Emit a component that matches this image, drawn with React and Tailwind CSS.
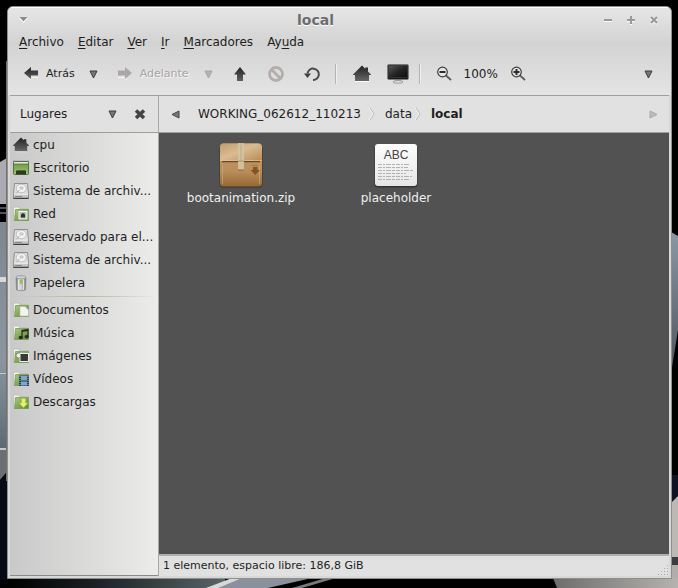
const menus = [
  ["", "A", "rchivo"],
  ["", "E", "ditar"],
  ["", "V", "er"],
  ["", "I", "r"],
  ["", "M", "arcadores"],
  ["Ay", "u", "da"],
];

function Wallpaper() {
  return (
    <svg className="absolute inset-0 w-full h-full" viewBox="0 0 678 588" preserveAspectRatio="none" aria-hidden="true">
      <defs>
        <linearGradient id="wl" x1="0" y1="0" x2="0" y2="1">
          <stop offset="0" stopColor="#7d8790" />
          <stop offset="0.6" stopColor="#8b96a0" />
          <stop offset="1" stopColor="#5c6973" />
        </linearGradient>
        <linearGradient id="wb" x1="0" y1="0" x2="1" y2="0">
          <stop offset="0" stopColor="#000" />
          <stop offset="0.4" stopColor="#1b2124" />
          <stop offset="1" stopColor="#5a6466" />
        </linearGradient>
        <linearGradient id="wr" x1="0" y1="0" x2="0" y2="1">
          <stop offset="0" stopColor="#8c97a5" />
          <stop offset="1" stopColor="#4c535c" />
        </linearGradient>
        <linearGradient id="wc" x1="0" y1="0" x2="1" y2="0">
          <stop offset="0" stopColor="#6f6d6c" />
          <stop offset="1" stopColor="#b5b2af" />
        </linearGradient>
      </defs>
      <rect width="678" height="588" fill="#000" />
      <path d="M0 162L7 158V204H0z" fill="#aaaab2" />
      <path d="M0 207h7v2H0zM0 212h7v2H0z" fill="#4c5260" />
      <rect y="222" width="7" height="228" fill="url(#wl)" />
      <path d="M0 277h7v5H0z" fill="#d8d8d8" />
      <path d="M0 373h7v1H0zM0 448h7v2H0z" fill="#c4c8cc" />
      <path d="M0 450h7v22L0 480z" fill="#6b6f74" />
      <path d="M0 480L7 472V580H0z" fill="#060a14" />
      <path d="M6 61h1v420h-1z" fill="#77716e" />
      <rect x="10" y="578" width="215" height="10" fill="url(#wb)" />
      <path d="M206 588L240 578H312L268 588z" fill="#8b909d" />
      <path d="M206 588L232 578H242L218 588z" fill="#d8d8d8" />
      <path d="M292 588L326 578H336L302 588z" fill="#77797d" />
      <path d="M671 232L678 236V330L671 374z" fill="url(#wr)" />
      <path d="M671 475h7v30l-7-3z" fill="#101422" />
      <path d="M671 503L678 496V557H671z" fill="#bcb9b4" />
      <path d="M671 557h7v8h-7z" fill="#3c3c40" />
      <path d="M671 565h7v14h-7z" fill="#b0adaa" />
      <path d="M553 578H678V588H557z" fill="url(#wc)" />
    </svg>
  );
}

function Down({ className = "fill-[#777] stroke-[#3c3c3c]" }) {
  return (
    <svg width="9" height="9" viewBox="0 0 9 9" className={className}>
      <path d="M1 1h7L4.500 8z" strokeWidth="1" />
    </svg>
  );
}

function Arrow({ muted = false }) {
  return (
    <svg width="16" height="16" viewBox="0 0 16 16" className={muted ? "-scale-x-100" : ""}>
      <defs>
        <linearGradient id="arrow" x1="0" y1="0" x2="0" y2="1">
          <stop offset="0" stopColor="#222" />
          <stop offset="1" stopColor="#606060" />
        </linearGradient>
      </defs>
      <path d="M7 14V11.500h8" stroke="#f4f4f4" fill="none" />
      <path d="M1 7L8 1v3.500h7v5H8V13z" fill={muted ? "#aaa7a6" : "url(#arrow)"} />
    </svg>
  );
}

function HomeIcon({ size = 18 }) {
  return (
    <svg width={size} height={size} viewBox="0 0 18 18">
      <defs>
        <linearGradient id="home" x1="0" y1="0" x2="0" y2="1">
          <stop offset="0" stopColor="#202020" />
          <stop offset="1" stopColor="#686868" />
        </linearGradient>
      </defs>
      <path d="M2 16.500h14" stroke="#fafafa" />
      <path d="M0 9.500L9 .5l3.200 3.200V2.500H15v4l3 3v.6h-2V16H2v-5.900H0z" fill="url(#home)" />
    </svg>
  );
}

function ZoomIcon({ plus }) {
  return (
    <svg width="16" height="16" viewBox="0 0 16 16" fill="none">
      <path d="M10 9.500l5 4.500" stroke="#5c5c5c" strokeWidth="1.800" />
      <circle cx="6.500" cy="6" r="4.800" stroke="#3b3b3b" strokeWidth="1.200" fill="#e6e6e6" />
      <path d={plus ? "M3.500 6h6M6.500 3v6" : "M3.500 6h6"} stroke="#2c2c2c" strokeWidth="2" />
    </svg>
  );
}

function Monitor() {
  return (
    <svg width="22" height="20" viewBox="0 0 22 20">
      <defs>
        <linearGradient id="screen" x1="0" y1="0" x2="1" y2="1">
          <stop offset="0" stopColor="#5a5a5a" />
          <stop offset="0.5" stopColor="#262626" />
          <stop offset="1" stopColor="#0c0c0c" />
        </linearGradient>
      </defs>
      <path d="M8 15.500h6v2H8z" fill="#b9b9b9" />
      <ellipse cx="11" cy="17.900" rx="5" ry="1.300" fill="#e4e4e4" stroke="#8a8a8a" strokeWidth="0.800" />
      <rect x="0.500" y="0.500" width="21" height="15" rx="1" fill="#1c1c1c" />
      <rect x="1.500" y="1.500" width="19" height="12" fill="url(#screen)" stroke="#3d3d3d" strokeWidth="0.600" />
      <path d="M1 .7h20" stroke="#777" strokeWidth="0.600" />
    </svg>
  );
}

function Separator() {
  return <div className="w-[2px] h-5 border-l border-[#b4b4b4] bg-[#efefef]" />;
}

function Drive() {
  return (
    <svg width="16" height="16" viewBox="0 0 16 16">
      <path d="M1.500.5h13l1 10v5H.5v-5z" fill="#dedede" stroke="#8f8f8f" />
      <path d="M1 11.500h14V15H1z" fill="#c6c6c6" />
      <path d="M1 11.300h14" stroke="#f6f6f6" strokeWidth="0.800" />
      <path d="M2 13.500h7" stroke="#8a8a8a" />
      <path d="M.5 15.300h15" stroke="#3e3e3e" strokeWidth="1.200" />
      <ellipse cx="8.300" cy="5.500" rx="5" ry="4.300" fill="#f3f3f3" stroke="#b4b4b4" strokeWidth="0.800" />
      <ellipse cx="8.500" cy="5" rx="1.700" ry="1.300" fill="#ddd" stroke="#a2a2a2" strokeWidth="0.600" />
      <path d="M3 10.500l3.500-3.500" stroke="#a6a6a6" />
    </svg>
  );
}

function Desktop() {
  return (
    <svg width="16" height="16" viewBox="0 0 16 16">
      <defs>
        <linearGradient id="desk" x1="0" y1="0" x2="0" y2="1">
          <stop offset="0" stopColor="#6a9440" />
          <stop offset="1" stopColor="#9dc66f" />
        </linearGradient>
      </defs>
      <rect x="0.500" y="1.500" width="15" height="13" rx="0.800" fill="url(#desk)" stroke="#55773a" />
      <path d="M1 2h14v1.800H1z" fill="#e2e6dd" />
      <path d="M0 1.300h16M1 4.200h14" stroke="#5c6a50" strokeWidth="0.700" />
      <path d="M3 11h10v3.500H3z" fill="#2f3a25" />
      <path d="M3.500 10.500h9" stroke="#55643f" />
    </svg>
  );
}

function Folder({ kind }) {
  return (
    <svg width="16" height="16" viewBox="0 0 16 16">
      <defs>
        <linearGradient id="folder" x1="0" y1="0" x2="1" y2="1">
          <stop offset="0" stopColor="#a9ca82" />
          <stop offset="1" stopColor="#5d8734" />
        </linearGradient>
      </defs>
      <path d="M.5 14.500v-12L1.500 1h4l1 1.500h8.500V14.500z" fill="#f5f5f2" stroke="#b7bbb0" strokeWidth="0.800" />
      <path d="M2.500 3.500h13v11H1.500z" fill="url(#folder)" stroke="#769a52" strokeWidth="0.800" />
      {kind === "red" && (
        <>
          <rect x="6" y="5.500" width="8" height="7.500" fill="#b9bcb4" stroke="#fafafa" />
          <path d="M8 8.500L10 7l2 1.500V11.500H8z" fill="#303030" />
        </>
      )}
      {kind === "documentos" && (
        <path d="M7 4.500h5L15.500 8v6H7z" fill="#f3f3ef" stroke="#b9bdb3" strokeWidth="0.700" />
      )}
      {kind === "musica" && (
        <g stroke="#262c22" strokeWidth="1.200" fill="#262c22">
          <path d="M9 12V5.500l6-1V11M9 6.500l6-1" fill="none" />
          <ellipse cx="7.800" cy="12.500" rx="1.600" ry="1.200" />
          <ellipse cx="13.700" cy="11.700" rx="1.600" ry="1.200" />
        </g>
      )}
      {kind === "imagenes" && (
        <>
          <circle cx="5.500" cy="7.500" r="2.600" fill="#eee" stroke="#777" />
          <rect x="7" y="5.500" width="8.500" height="8" fill="#383a38" stroke="#ececec" />
        </>
      )}
      {kind === "videos" && (
        <>
          <rect x="6" y="4.500" width="10" height="10.500" fill="#2c4152" />
          <path d="M8 5h6v4.500H8zM8 10.500h6v4H8z" fill="#7ba7c9" />
          <path d="M7 5v10M15 5v10" stroke="#9fb2c0" strokeDasharray="1 1" />
        </>
      )}
      {kind === "descargas" && (
        <path d="M8.500 4.500h4V9H15l-4.500 4.800L6 9h2.500z" fill="#e4f26b" stroke="#a3bd3a" strokeWidth="0.500" />
      )}
    </svg>
  );
}

function Trash() {
  return (
    <svg width="16" height="16" viewBox="0 0 16 16">
      <defs>
        <linearGradient id="can" x1="0" y1="0" x2="1" y2="0">
          <stop offset="0" stopColor="#77797d" />
          <stop offset="0.400" stopColor="#e0e1e3" />
          <stop offset="1" stopColor="#808286" />
        </linearGradient>
      </defs>
      <path d="M3 2.500l.5 12.200c1 1.200 8 1.200 9 0L13 2.500z" fill="url(#can)" stroke="#808286" strokeWidth="0.700" />
      <path d="M5.500 4v11M10.500 4v11" stroke="#f0f0f0" strokeWidth="0.800" />
      <ellipse cx="8" cy="2.300" rx="5" ry="1.600" fill="#d3d4d7" stroke="#85878a" strokeWidth="0.700" />
      <path d="M6.500 5l2.500-.5L10 7 8.500 9H7z" fill="#8fc742" />
    </svg>
  );
}

const places = [
  { name: "cpu", icon: <HomeIcon size={16} /> },
  { name: "Escritorio", icon: <Desktop /> },
  { name: "Sistema de archiv...", icon: <Drive /> },
  { name: "Red", icon: <Folder kind="red" /> },
  { name: "Reservado para el...", icon: <Drive /> },
  { name: "Sistema de archiv...", icon: <Drive /> },
  { name: "Papelera", icon: <Trash /> },
];

const bookmarks = [
  { name: "Documentos", icon: <Folder kind="documentos" /> },
  { name: "Música", icon: <Folder kind="musica" /> },
  { name: "Imágenes", icon: <Folder kind="imagenes" /> },
  { name: "Vídeos", icon: <Folder kind="videos" /> },
  { name: "Descargas", icon: <Folder kind="descargas" /> },
];

function PlaceList({ items }) {
  return (
    <ul>
      {items.map((item, i) => (
        <li key={i}>
          <a href="#" className="flex items-center h-[23px] pl-[3px] gap-1 whitespace-nowrap">
            <span className="shrink-0">{item.icon}</span>
            {item.name}
          </a>
        </li>
      ))}
    </ul>
  );
}

function ZipIcon() {
  return (
    <svg width="46" height="46" viewBox="0 0 46 46">
      <defs>
        <linearGradient id="boxTop" x1="0" y1="0" x2="1" y2="1">
          <stop offset="0" stopColor="#c39c6c" />
          <stop offset="0.450" stopColor="#dabb92" />
          <stop offset="1" stopColor="#b78b56" />
        </linearGradient>
        <linearGradient id="boxFront" x1="0" y1="0" x2="0" y2="1">
          <stop offset="0" stopColor="#c39a66" />
          <stop offset="0.650" stopColor="#b98d58" />
          <stop offset="1" stopColor="#966736" />
        </linearGradient>
      </defs>
      <rect x="1.500" y="3" width="43" height="42.500" rx="3.500" fill="#2d2720" opacity="0.700" />
      <rect x="2" y="1.500" width="42" height="43" rx="3" fill="url(#boxFront)" />
      <path d="M5 1.500h36l3 3V19H2V4.500z" fill="url(#boxTop)" />
      <path d="M2 18.500h42" stroke="#e3c49b" strokeWidth="0.700" />
      <path d="M4 19.700h38" stroke="#6b4824" strokeWidth="1.200" />
      <path d="M4.500 42V21M41.500 42V21" stroke="#cda877" strokeWidth="0.700" />
      <path d="M20 1h6v27h-6z" fill="#d4c4a2" opacity="0.900" />
      <path d="M23 1v18" stroke="#b6a27b" strokeWidth="0.700" />
      <path d="M20 19h6" stroke="#a58a60" strokeWidth="0.700" />
      <path d="M20 28h6" stroke="#86683f" />
      <path d="M35 25h4.500v3h2.500l-4.700 5-4.800-5H35z" fill="#875126" />
      <path d="M33.500 23.500h7" stroke="#a8733f" strokeWidth="0.800" />
    </svg>
  );
}

function TextIcon() {
  return (
    <svg width="46" height="46" viewBox="0 0 46 46">
      <defs>
        <linearGradient id="paper" x1="0" y1="0" x2="0" y2="1">
          <stop offset="0" stopColor="#fdfdfd" />
          <stop offset="1" stopColor="#e6e6e6" />
        </linearGradient>
      </defs>
      <rect x="1.500" y="3" width="43" height="42.500" rx="3.500" fill="#262626" opacity="0.700" />
      <rect x="2" y="2" width="42" height="42" rx="3" fill="url(#paper)" />
      <text x="23" y="17" textAnchor="middle" fontSize="12" fontFamily="Liberation Sans, sans-serif" fill="#444">
        ABC
      </text>
      <g stroke="#a2a2a2" strokeWidth="0.800" strokeDasharray="4 1 2 1 5 1 3 1">
        <path d="M5 22.500h31" />
        <path d="M5 25.500h30" />
        <path d="M5 28.500h36" />
        <path d="M5 31.500h28" />
        <path d="M5 34.500h34" />
        <path d="M5 37.500h31" />
      </g>
    </svg>
  );
}

function Chevron() {
  return (
    <svg width="6" height="12" viewBox="0 0 6 12" fill="none">
      <path d="M1 0l4 6-4 6" stroke="#b4b4b4" />
      <path d="M0 0l4 6-4 6" stroke="#f2f2f2" />
    </svg>
  );
}

function TitleBar() {
  return (
    <div className="relative flex items-center justify-between h-[23px] pl-[11px] pr-3 text-[#969696]">
      <button aria-label="Menú de la ventana">
        <svg width="9" height="6" viewBox="0 0 9 6" className="block">
          <path d="M0 1h9L4.500 6z" fill="#fff" />
          <path d="M0.500 0h8L4.500 4.500z" fill="#8c8c8c" />
        </svg>
      </button>
      <h1 className="absolute inset-x-0 text-center text-sm leading-4 font-bold text-[#6c6c6c] pointer-events-none pr-12 [text-shadow:0_1px_0_#fff]">
        local
      </h1>
      <div className="flex gap-[13px]">
        <button aria-label="Minimizar">
          <svg width="10" height="10" viewBox="0 0 10 10" className="block">
            <path d="M1 6.500h8" stroke="#fff" />
            <path d="M1 5h8" stroke="#999" strokeWidth="2" />
          </svg>
        </button>
        <button aria-label="Maximizar">
          <svg width="10" height="10" viewBox="0 0 10 10" className="block">
            <path d="M1 6.500h8M4 9.500h2" stroke="#fff" />
            <path d="M1 5h8M5 1v8" stroke="#999" strokeWidth="2" />
          </svg>
        </button>
        <button aria-label="Cerrar">
          <svg width="10" height="10" viewBox="0 0 10 10" className="block">
            <path d="M2 3l6 6M8 3L2 9" stroke="#fff" strokeWidth="2" />
            <path d="M2 2l6 6M8 2L2 8" stroke="#999" strokeWidth="2" />
          </svg>
        </button>
      </div>
    </div>
  );
}

function Toolbar() {
  return (
    <div className="flex items-center h-[42px] pl-[15px] pr-[18px] text-[11px]">
      <button className="flex items-center gap-[7px]">
        <Arrow />
        Atrás
      </button>
      <button className="ml-[14px]" aria-label="Historial atrás">
        <Down />
      </button>
      <button disabled className="flex items-center gap-[7px] ml-[19px] text-[#a8a5a4] [text-shadow:1px_1px_0_#f6f6f6]">
        <Arrow muted />
        Adelante
      </button>
      <button disabled className="ml-[15px]" aria-label="Historial adelante">
        <Down className="fill-[#b4b4b4] stroke-[#a4a4a4]" />
      </button>
      <div className="flex items-center gap-5 ml-[19px]">
        <button aria-label="Subir">
          <svg width="16" height="16" viewBox="0 0 16 16">
            <path d="M8 1l6 7.500h-3V15H5V8.500H2z" fill="url(#arrow)" />
          </svg>
        </button>
        <button disabled aria-label="Detener">
          <svg width="16" height="16" viewBox="0 0 16 16" fill="none" stroke="#b3aeac" strokeWidth="2.800">
            <circle cx="8" cy="8" r="6.500" />
            <path d="M3.500 3.500l9 9" />
          </svg>
        </button>
        <button aria-label="Recargar">
          <svg width="16" height="16" viewBox="0 0 16 16" fill="none">
            <path d="M3.500 7.500a5.700 5.700 0 1 1 5.500 6.500" stroke="#4c4c4c" strokeWidth="2" />
            <path d="M0 7.500h7L3.500 12z" fill="#3d3d3d" />
          </svg>
        </button>
      </div>
      <div className="flex items-center gap-4 ml-[15px]">
        <Separator />
        <button aria-label="Carpeta personal">
          <HomeIcon />
        </button>
        <button aria-label="Equipo">
          <Monitor />
        </button>
      </div>
      <div className="flex items-center gap-3 ml-[10px]">
        <Separator />
        <button aria-label="Reducir" className="ml-[3px]">
          <ZoomIcon />
        </button>
        <span className="text-xs">100%</span>
        <button aria-label="Ampliar">
          <ZoomIcon plus />
        </button>
      </div>
      <button className="ml-auto" aria-label="Más opciones">
        <Down />
      </button>
    </div>
  );
}

function Sidebar() {
  return (
    <aside className="w-[149px] shrink-0 flex flex-col border-r border-[#a9a9a9]">
      <div className="flex items-center h-[37px] pl-[10px] pr-3 bg-[#e1e1e1] border-b border-[#9d9f9d]">
        <h2>Lugares</h2>
        <div className="flex items-center gap-[17px] ml-auto">
          <button aria-label="Cambiar panel">
            <Down />
          </button>
          <button aria-label="Cerrar panel">
            <svg width="12" height="12" viewBox="0 0 12 12" className="block">
              <path d="M2 2.500l8 7.500M10 2.500L2 10" stroke="#444" strokeWidth="3.600" />
            </svg>
          </button>
        </div>
      </div>
      <nav className="flex-1 border-b border-[#8a8a8a] bg-linear-to-r from-[#c9c9c9] to-[#ececea]">
        <PlaceList items={places} />
        <div className="h-1 pt-[2px]">
          <div className="h-px bg-linear-to-r from-transparent via-[#b9b5a2] to-transparent" />
        </div>
        <PlaceList items={bookmarks} />
      </nav>
    </aside>
  );
}

function PathBar() {
  return (
    <div className="flex items-center h-[37px] pl-3 pr-[11px] bg-[#e1e1e1] border-b border-[#9d9f9d]">
      <button aria-label="Anterior">
        <svg width="9" height="9" viewBox="0 0 9 9">
          <path d="M8 1v7L1 4.500z" fill="#777" stroke="#444" />
        </svg>
      </button>
      <button className="ml-[18px] mr-2">WORKING_062612_110213</button>
      <Chevron />
      <button className="ml-[10px] mr-[3px]">data</button>
      <Chevron />
      <button className="ml-[10px] font-bold">local</button>
      <button disabled className="ml-auto" aria-label="Siguiente">
        <svg width="9" height="9" viewBox="0 0 9 9">
          <path d="M1 1v7l7-3.500z" fill="#bdbdbd" stroke="#a6a6a6" />
        </svg>
      </button>
    </div>
  );
}

export default function App() {
  return (
    <div className="relative h-screen flex pt-[6px] pl-[7px] pr-[6px] pb-[9px] font-['DejaVu_Sans',sans-serif] text-xs leading-4 text-[#1e1e1e]">
      <Wallpaper />
      <div className="relative flex-1 min-w-0 flex flex-col rounded-t-md border border-[#8d8f8d] bg-[#d8d8d8] overflow-hidden">
        <header className="bg-linear-to-b from-[#e6e6e6] via-[#d3d3d3] via-40% to-[#e4e4e4] border-t border-white">
          <TitleBar />
          <nav className="flex items-center h-[22px] pl-[11px] gap-[14px]">
            {menus.map(([before, key, after]) => (
              <button key={after}>
                {before}
                <span className="underline underline-offset-2">{key}</span>
                {after}
              </button>
            ))}
          </nav>
          <Toolbar />
        </header>
        <div className="flex-1 min-h-0 flex mx-[2px] mb-[2px] border-t border-[#9d9f9d]">
          <Sidebar />
          <section className="flex-1 min-w-0 flex flex-col">
            <PathBar />
            <main className="flex-1 bg-[#525252] text-[#f0f0f0] pt-[9px] pl-[17px]">
              <div className="flex gap-[25px]">
                <a href="#" className="flex flex-col items-center gap-[2px] w-[130px]">
                  <ZipIcon />
                  bootanimation.zip
                </a>
                <a href="#" className="flex flex-col items-center gap-[2px] w-[130px]">
                  <TextIcon />
                  placeholder
                </a>
              </div>
            </main>
            <footer className="flex items-center h-[22px] pl-1 bg-[#e1e1e1] border-t-2 border-[#b0b0b0] text-[11px]">
              1 elemento, espacio libre: 186,8 GiB
              <svg width="11" height="11" viewBox="0 0 11 11" className="ml-auto self-end">
                <path
                  d="M9 0h1v1h-1zM9 3h1v1h-1zM6 3h1v1h-1zM9 6h1v1h-1zM6 6h1v1h-1zM3 6h1v1h-1zM9 9h1v1h-1zM6 9h1v1h-1zM3 9h1v1h-1zM0 9h1v1h-1z"
                  fill="#a8a8a8"
                />
              </svg>
            </footer>
          </section>
        </div>
      </div>
    </div>
  );
}
